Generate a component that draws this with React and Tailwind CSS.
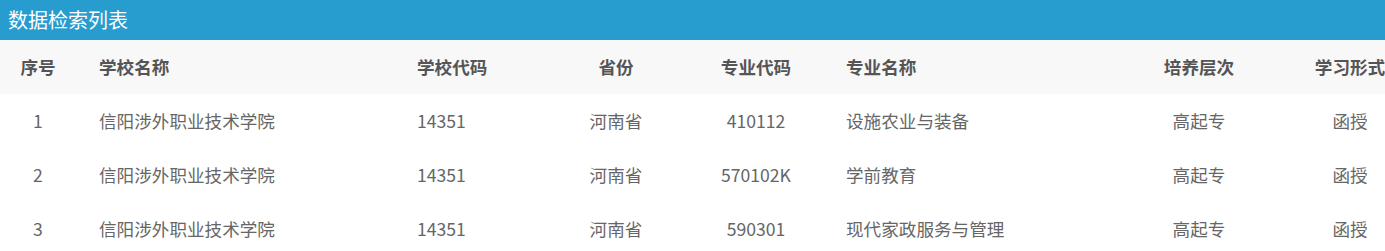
import React from "react";

const rows = [
  ["1", "信阳涉外职业技术学院", "14351", "河南省", "410112", "设施农业与装备", "高起专", "函授"],
  ["2", "信阳涉外职业技术学院", "14351", "河南省", "570102K", "学前教育", "高起专", "函授"],
  ["3", "信阳涉外职业技术学院", "14351", "河南省", "590301", "现代家政服务与管理", "高起专", "函授"],
];

const headers = ["序号", "学校名称", "学校代码", "省份", "专业代码", "专业名称", "培养层次", "学习形式"];
const align = ["text-center", "text-left pl-[23px]", "text-left pl-[23px]", "text-center", "text-center", "text-left pl-[23px]", "text-center", "text-center"];
const widths = [76, 318, 149, 146, 134, 300, 152, 150];

export default function App() {
  return (
    <div className="w-[1385px] overflow-hidden bg-white" style={{ fontFamily: '"Noto Sans CJK SC", "Noto Sans", sans-serif' }}>
      <div className="h-[40px] bg-[#269ccf] flex items-center pl-[8px] text-white text-[20px] leading-none">
        数据检索列表
      </div>
      <table className="table-fixed border-collapse w-[1425px]">
        <colgroup>
          {widths.map((w, i) => (
            <col key={i} style={{ width: w }} />
          ))}
        </colgroup>
        <thead>
          <tr className="h-[54px] bg-[#f8f8f8]">
            {headers.map((h, i) => (
              <th key={i} className={`${align[i]} p-0 font-bold text-[17.6px] text-[#555] whitespace-nowrap`}>
                {h}
              </th>
            ))}
          </tr>
        </thead>
        <tbody>
          {rows.map((r, ri) => (
            <tr key={ri} className="h-[54px]">
              {r.map((c, i) => (
                <td key={i} className={`${align[i]} p-0 text-[17.6px] text-[#666] whitespace-nowrap`}>
                  {c}
                </td>
              ))}
            </tr>
          ))}
        </tbody>
      </table>
    </div>
  );
}
